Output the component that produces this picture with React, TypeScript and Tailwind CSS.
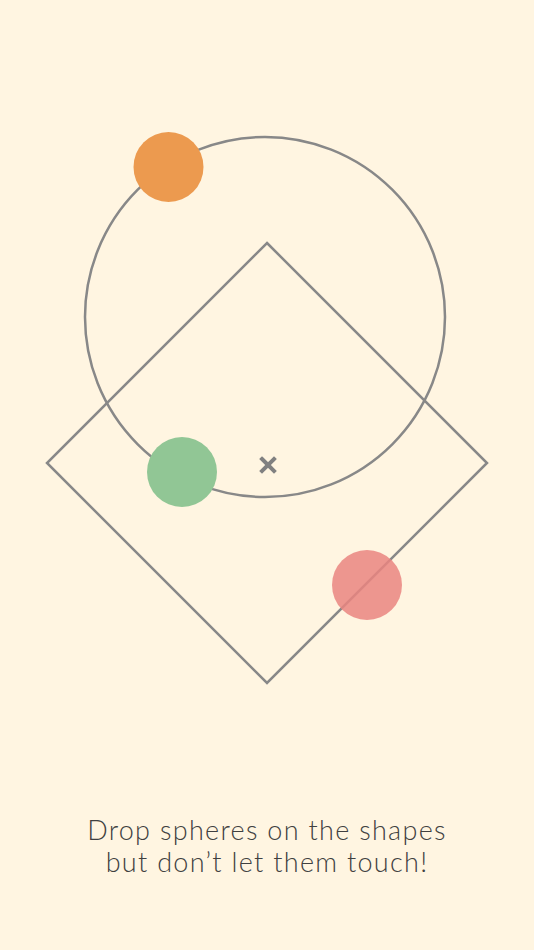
import React from "react";

export default function App() {
  return (
    <div className="w-[534px] h-[950px] bg-[#FFF5E1] flex flex-col overflow-hidden">
      <svg width="534" height="814" viewBox="0 0 534 814" className="block shrink-0">
        <circle cx="265" cy="317" r="180" fill="none" stroke="#888888" strokeWidth="2.5" />
        <polygon points="267,243 487,463 267,683 47,463" fill="none" stroke="#888888" strokeWidth="2.5" strokeLinejoin="miter" />
        <circle cx="168.5" cy="167" r="35" fill="#EC9A4F" />
        <circle cx="182" cy="472" r="35" fill="#91C695" />
        <circle cx="367" cy="585" r="35" fill="#EA8580" fillOpacity="0.85" />
        <g stroke="#808080" strokeWidth="4" strokeLinecap="square">
          <line x1="262" y1="459" x2="274" y2="471" />
          <line x1="274" y1="459" x2="262" y2="471" />
        </g>
      </svg>
      <div
        className="text-center text-[27px] leading-[32px] text-[#404040] font-light tracking-[1.3px]"
        style={{ fontFamily: "Lato, 'Open Sans', sans-serif" }}
      >
        <div>Drop spheres on the shapes</div>
        <div>but don’t let them touch!</div>
      </div>
    </div>
  );
}
